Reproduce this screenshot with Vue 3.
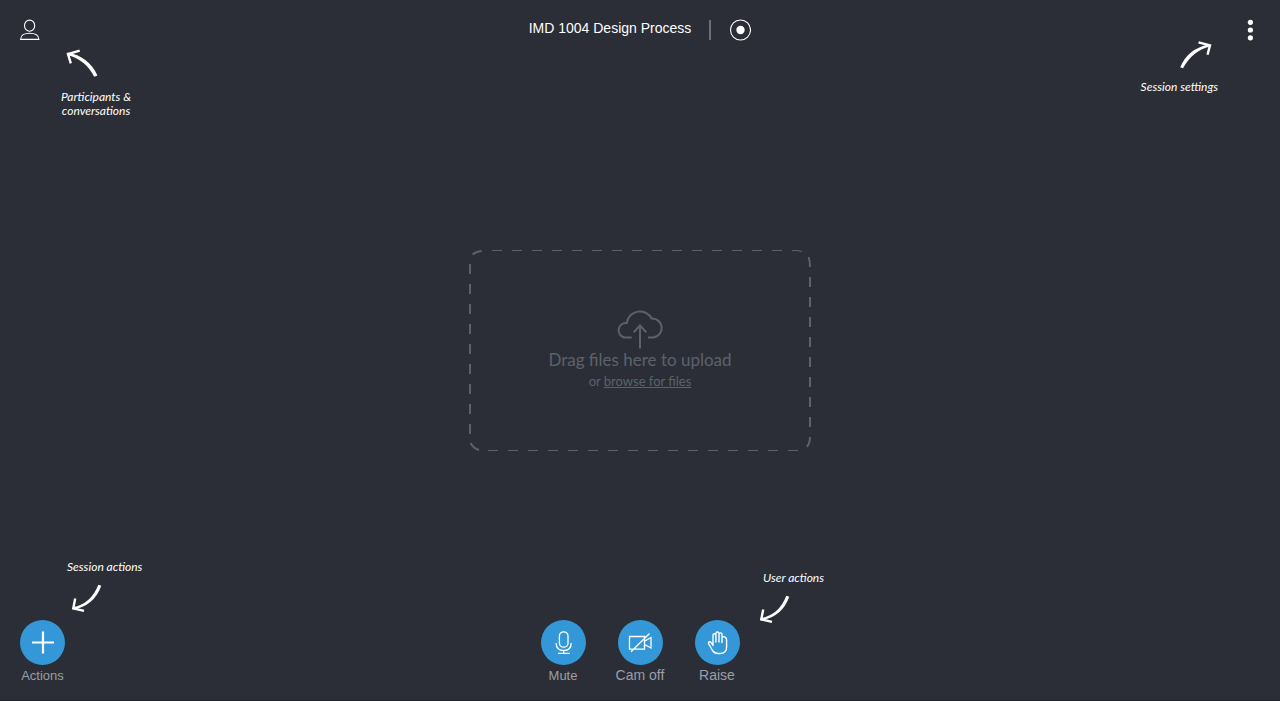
<script setup>
const topDashes = Array.from({ length: 15 }, (_, i) => 23 + i * 20)
const bottomDashes = Array.from({ length: 16 }, (_, i) => 19 + i * 20)
const leftDashes = Array.from({ length: 9 }, (_, i) => 14 + i * 20)
const rightDashes = Array.from({ length: 8 }, (_, i) => 27 + i * 20)
</script>

<template>
  <div class="session">
    <header class="topbar">
      <div class="side">
        <button class="icon-btn" type="button" aria-label="Participants and conversations">
          <svg width="20" height="22" viewBox="0 0 20 22" fill="none" stroke="#fff" stroke-width="1.1">
            <ellipse cx="9.6" cy="6.7" rx="5.1" ry="5.6" />
            <path d="M.6 20.4C.6 16 4.2 14.2 9.7 14.2S18.9 16 18.9 20.4Z" />
          </svg>
        </button>
      </div>
      <div class="heading">
        <h1>IMD 1004 Design Process</h1>
        <span class="divider"></span>
        <button class="icon-btn" type="button" aria-label="Record">
          <svg width="22" height="22" viewBox="0 0 22 22">
            <circle cx="11.500" cy="11" r="10" fill="none" stroke="#fff" stroke-width="1.1" />
            <circle cx="11.500" cy="11" r="4.2" fill="#fff" />
          </svg>
        </button>
      </div>
      <div class="side end">
        <button class="icon-btn" type="button" aria-label="Session settings">
          <svg width="20" height="22" viewBox="0 0 20 22" fill="#fff">
            <circle cx="10.4" cy="3.3" r="2.6" />
            <circle cx="10.4" cy="11" r="2.6" />
            <circle cx="10.4" cy="18.8" r="2.6" />
          </svg>
        </button>
      </div>
      <div class="hint hint-people">
        <svg width="38" height="30" viewBox="0 0 38 30">
          <path class="shaft" d="M36.4 27.4Q27.300 8.300 6.500 4.600L6 7Q24.500 11.500 33.200 28.800Z" />
          <path class="barb" d="M18.700 2.700L7 6L9.800 15.300" />
        </svg>
        <p>Participants &amp;<br />conversations</p>
      </div>
      <div class="hint hint-settings">
        <svg width="38" height="30" viewBox="0 0 38 30">
          <path class="shaft" d="M.300 27.300Q7.500 8.700 29.500 4.200L30 6.400Q12 11 3 28.200Z" />
          <path class="barb" d="M18.500 2.400L30 5.400L27.500 14.800" />
        </svg>
        <p>Session settings</p>
      </div>
    </header>

    <main class="stage">
      <section class="dropzone">
        <svg class="outline" viewBox="0 0 342 201" aria-hidden="true">
          <g fill="#5b626c">
            <rect v-for="x in topDashes" :key="'t' + x" :x="x" y="0" width="10" height="1" />
            <rect v-for="x in bottomDashes" :key="'b' + x" :x="x" y="200" width="10" height="1" />
            <rect v-for="y in leftDashes" :key="'l' + y" x="0" :y="y" width="2" height="10" />
            <rect v-for="y in rightDashes" :key="'r' + y" x="340" :y="y" width="2" height="10" />
          </g>
          <g fill="none" stroke="#5b626c" stroke-width="2">
            <path d="M3.600 4.600Q7 1.400 12.700 1" />
            <path d="M1.600 193Q4 198 10 200" />
            <path d="M341 187Q341 193 338 196.800" />
            <path d="M339.600 7Q341 11 341 17" />
            <path d="M323 .5H328L333 1.500" stroke-width="1.200" />
          </g>
        </svg>
        <svg class="cloud" width="48" height="40" viewBox="0 0 48 40" fill="none" stroke="#5b626c" stroke-width="2">
          <path d="M15.700 28.500H9A7.200 7.200 0 0 1 10.700 14A13.300 13.300 0 0 1 35.700 9.600A9.500 9.500 0 0 1 37.500 28.500H32" />
          <path d="M24 39.500V16.500M17.700 23.200L24 16.500L30.300 23.200" />
        </svg>
        <p class="drop-title">Drag files here to upload</p>
        <p class="drop-sub">or <a href="#">browse for files</a></p>
      </section>
    </main>

    <footer class="actions">
      <div class="side">
        <button class="action" type="button">
          <svg class="disc" viewBox="0 0 45 45" fill="none" stroke="#fff" stroke-width="2.200">
            <path d="M12 22.500H34M23 11.500V33.500" />
          </svg>
          <span>Actions</span>
        </button>
      </div>
      <div class="user-actions">
        <button class="action" type="button">
          <svg class="disc" viewBox="0 0 45 45" fill="none" stroke="#fff" stroke-width="1.300">
            <rect x="18.400" y="11.800" width="8.600" height="15.400" rx="4.300" />
            <path d="M15.200 23Q15.200 30.500 22.700 30.500T30.200 23M22.700 30.500V33.300M17 33.400H28.700" />
          </svg>
          <span>Mute</span>
        </button>
        <button class="action large" type="button">
          <svg class="disc" viewBox="0 0 45 45" fill="none" stroke="#fff" stroke-width="1.300">
            <path d="M11.500 16.500H26.500V29.200H11.500ZM26.500 21.200L33 17.500V28L26.500 24.500M13 31.700L31.500 13.500" />
          </svg>
          <span>Cam off</span>
        </button>
        <button class="action large" type="button">
          <svg class="disc" viewBox="0 0 45 45" fill="none" stroke="#fff" stroke-width="1.400" stroke-linejoin="round">
            <path d="M18 25.500V15.200Q18 13.800 19.400 13.800T20.900 15.200V22V13.500Q20.900 12 22.400 12T24 13.500V22V14.200Q24 12.900 25.500 12.900T27 14.200V22.500V18.200Q27 16.600 28.600 16.600Q31.600 16.900 31.600 20.500V27Q31.600 33.500 25 33.500H23Q19.500 33.500 17.500 30.500L13.800 24Q13 22.200 14.500 21.700Q16 21.500 18 25.500Z" />
          </svg>
          <span>Raise</span>
        </button>
      </div>
      <div class="side"></div>
      <div class="hint hint-session">
        <p>Session actions</p>
        <svg width="34" height="30" viewBox="0 0 34 30">
          <path class="shaft" d="M29.300 2.800Q22 22 3.500 25.300L3.900 27.600Q25 24 32.300 3.800Z" />
          <path class="barb" d="M6.200 16.500L4.300 26.300L15 28.800" />
        </svg>
      </div>
      <div class="hint hint-user">
        <p>User actions</p>
        <svg width="34" height="30" viewBox="0 0 34 30">
          <path class="shaft" d="M29.300 2.800Q22 22 3.500 25.300L3.900 27.600Q25 24 32.300 3.800Z" />
          <path class="barb" d="M6.200 16.500L4.300 26.300L15 28.800" />
        </svg>
      </div>
    </footer>
  </div>
</template>

<style>
body {
  margin: 0;
  background: #2b2e36;
}
</style>

<style scoped>
.session {
  box-sizing: border-box;
  min-height: 100vh;
  display: grid;
  grid-template-rows: auto 1fr auto;
  background: #2b2e36;
  border-bottom: 1px solid #202229;
  color: #fff;
  font-family: "Liberation Sans", Arial, sans-serif;
}
h1,
p {
  margin: 0;
  font-weight: 400;
}
svg {
  display: block;
}
button {
  padding: 0;
  border: 0;
  background: none;
  color: inherit;
  font: inherit;
  cursor: pointer;
}
.topbar,
.actions {
  position: relative;
  display: grid;
  grid-template-columns: 1fr auto 1fr;
  padding: 0 20px;
}
.topbar {
  padding-top: 19px;
  padding-bottom: 40px;
}
.side {
  display: flex;
}
.end {
  justify-content: flex-end;
}
.heading {
  display: flex;
  align-items: center;
  gap: 18px;
}
h1 {
  font-size: 14px;
  line-height: 18px;
  padding-bottom: 4px;
}
.divider {
  width: 2px;
  height: 20px;
  background: #6c6f76;
}
.hint {
  position: absolute;
  display: flex;
  flex-direction: column;
  font: italic 12px/14px Lato, sans-serif;
  text-align: center;
  white-space: nowrap;
}
.shaft {
  fill: #fff;
}
.barb {
  fill: none;
  stroke: #fff;
  stroke-width: 2.4;
}
.hint-people {
  left: 61px;
  top: 48px;
  gap: 12px;
}
.hint-settings {
  right: 62px;
  top: 40px;
  gap: 10px;
  align-items: flex-end;
}
.hint-session {
  left: 67px;
  bottom: 88px;
  gap: 8px;
}
.hint-session svg {
  margin-left: 2px;
}
.hint-user {
  left: calc(50% + 117px);
  bottom: 77px;
  gap: 8px;
}
.hint-user p {
  padding-left: 6px;
}
.stage {
  display: flex;
  align-items: center;
  justify-content: center;
}
.dropzone {
  position: relative;
  box-sizing: border-box;
  width: 342px;
  padding: 59px 0 60px;
  display: flex;
  flex-direction: column;
  align-items: center;
  color: #5b626c;
  font-family: Lato, sans-serif;
}
.outline {
  position: absolute;
  inset: 0;
  width: 100%;
  height: 100%;
}
.cloud {
  position: relative;
}
.drop-title {
  position: relative;
  font-size: 17px;
  line-height: 22px;
}
.drop-sub {
  position: relative;
  font-size: 13px;
  line-height: 20px;
}
.drop-sub a {
  color: inherit;
}
.user-actions {
  display: flex;
  gap: 22px;
}
.action {
  display: flex;
  flex-direction: column;
  align-items: center;
  width: 45px;
  color: #9a9ea6;
  font-size: 13px;
  line-height: 22px;
  white-space: nowrap;
}
.user-actions .action {
  width: 55px;
}
.user-actions .large {
  font-size: 14px;
  line-height: 20px;
}
.actions {
  padding-bottom: 13px;
}
.disc {
  width: 45px;
  height: 45px;
  border-radius: 50%;
  background: #3498d8;
}
</style>
